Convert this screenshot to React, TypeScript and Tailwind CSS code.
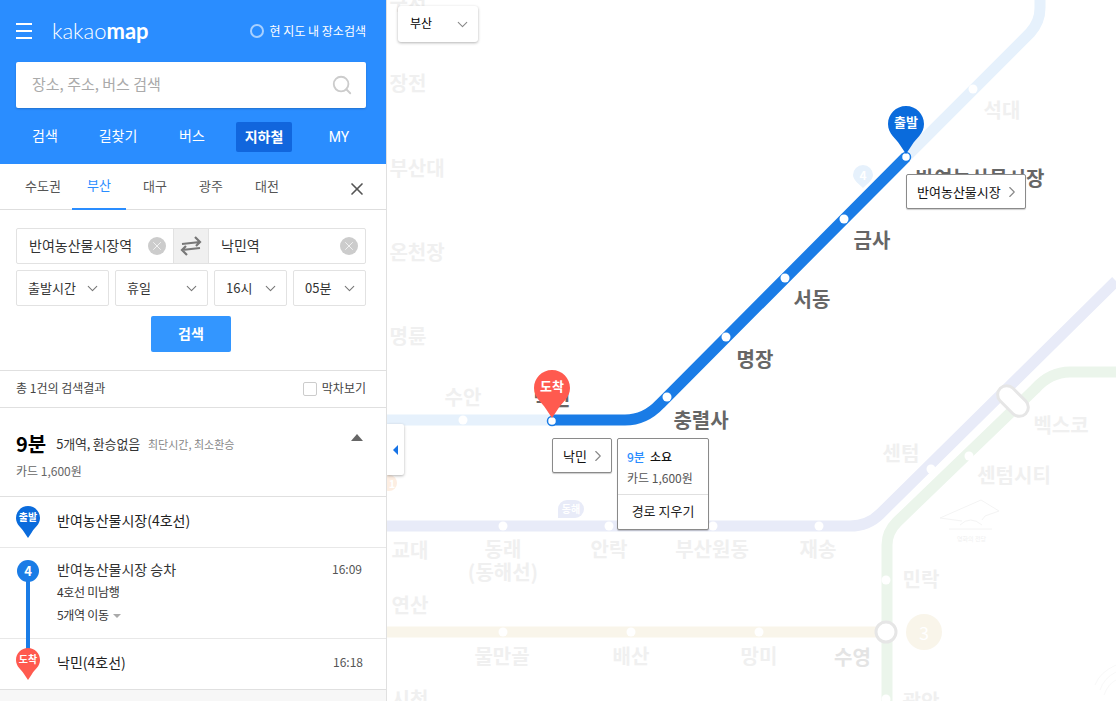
import React from "react";
import { ChevronDown, ChevronRight, X, Search } from "lucide-react";

const font = "[font-family:'Noto_Sans_CJK_KR','Noto_Sans',sans-serif]";

function Pin({ color, label, w, h, text }: { color: string; label: string; w: number; h: number; text: string }) {
  return (
    <div className="relative" style={{ width: w, height: h }}>
      <svg viewBox="0 0 36 48" width={w} height={h} className="block">
        <path d="M18 0C8 0 0 8 0 18c0 10 8 14 12 21l6 9 6-9c4-7 12-11 12-21C36 8 28 0 18 0z" fill={color} />
      </svg>
      <span className={`absolute left-0 right-0 text-center text-white font-bold ${text}`}>{label}</span>
    </div>
  );
}

const faint: [string, number, number][] = [
  ["구서", 408, 2], ["장전", 408, 83], ["부산대", 417, 168], ["온천장", 417, 252], ["명륜", 408, 336],
  ["수안", 463, 397], ["교대", 410, 550], ["동래", 503, 549], ["(동해선)", 503, 572], ["안락", 609, 549],
  ["부산원동", 712, 549], ["재송", 818, 549], ["연산", 410, 605], ["물만골", 502, 656], ["배산", 631, 656],
  ["망미", 759, 656], ["시청", 410, 699], ["민락", 921, 579], ["광안", 921, 701], ["센텀", 901, 453],
  ["센텀시티", 1014, 475], ["벡스코", 1061, 425], ["석대", 1002, 110],
];
const dark: [string, number, number][] = [
  ["금사", 872, 240], ["서동", 812, 299], ["명장", 755, 359], ["충렬사", 701, 420],
  ["반여농산물시장", 980, 178], ["낙민", 552, 398],
];
const dots: [number, number][] = [
  [463, 420], [503, 526], [609, 526], [713, 526], [819, 526], [503, 632], [631, 632], [759, 632],
  [886, 580], [969, 456], [886, 699], [931, 469], [973, 89], [667, 397], [726, 337], [785, 278], [844, 219],
];

function MapCanvas() {
  return (
    <div className="relative h-full flex-1 overflow-hidden bg-white">
      <svg width={1116} height={701} viewBox="0 0 1116 701" className="absolute -left-[387px] top-0" fill="none">
        <path d="M387 632H886" stroke="#f9f5ea" strokeWidth="11" />
        <path d="M887 701V545Q887 532 897 522L1035 389Q1050 372 1070 372H1116" stroke="#ebf5eb" strokeWidth="11" />
        <path d="M387 526H850Q868 526 880 514L1116 281" stroke="#e8ebf8" strokeWidth="11" />
        <path d="M387 420H552M906 157L1030 33Q1040 22 1040 8V0" stroke="#e6f1fc" strokeWidth="11" />
        <path d="M552 420H625Q645 420 660 404L906 157" stroke="#1a7ce6" strokeWidth="11" />
        {dots.map(([x, y]) => <circle key={`${x}-${y}`} cx={x} cy={y} r="4.5" fill="#fff" />)}
        <circle cx="552" cy="421" r="4.5" fill="#fff" stroke="#1a7ce6" strokeWidth="1.5" />
        <circle cx="906" cy="157" r="4.5" fill="#fff" stroke="#1a7ce6" strokeWidth="1.5" />
        <circle cx="886" cy="632" r="10" fill="#fff" stroke="#e6e6e6" strokeWidth="3" />
        <rect x="995" y="392" width="36" height="18" rx="9" transform="rotate(45 1013 401)" fill="#fff" stroke="#e6e6e6" strokeWidth="3" />
        <circle cx="924" cy="632" r="18" fill="#f9f5ea" />
        <circle cx="389" cy="483" r="8" fill="#fdeee2" />
        <path d="M863 165a10 10 0 0 1 10 10c0 5-6 9-10 13-4-4-10-8-10-13a10 10 0 0 1 10-10z" fill="#e6f1fc" />
        <path d="M558 509a9 9 0 0 1 9-9h8a9 9 0 0 1 0 18h-17z" fill="#e8ebf8" />
        <path d="M940 518L981 500L999 511L985 516L982 520M940 518L962 521M949 529H992M960 525Q970 515 982 525" stroke="#f4f4f4" strokeWidth="1" />
        <path d="M1116 665Q1100 672 1095 685M1116 672Q1104 678 1100 690M1116 680Q1108 684 1104 695" stroke="#f8f8f8" strokeWidth="1" />
      </svg>

      {faint.map(([t, x, y]) => (
        <span key={t} className="absolute -translate-x-1/2 -translate-y-1/2 whitespace-nowrap text-[20px] font-bold text-[#f0f0f0]" style={{ left: x - 387, top: y }}>{t}</span>
      ))}
      <span className="absolute left-[447px] top-[643px] text-[20px] font-bold leading-[28px] text-[#e4e4e4]">수영</span>
      {dark.map(([t, x, y]) => (
        <span key={t} className="absolute -translate-x-1/2 -translate-y-1/2 whitespace-nowrap text-[20px] font-bold text-[#666]" style={{ left: x - 387, top: y }}>{t}</span>
      ))}
      <span className="absolute left-[525px] top-[623px] w-[24px] text-center text-[18px] leading-[18px] font-normal text-white">3</span>
      <span className="absolute left-[170px] top-[504px] w-[28px] text-center text-[10px] leading-[10px] font-bold text-white">동해</span>
      <span className="absolute left-[471px] top-[168px] w-[10px] text-center text-[12px] leading-[14px] font-bold text-white">4</span>
      <span className="absolute left-0 top-[476px] w-[10px] text-center text-[11px] leading-[14px] font-bold text-white">1</span>
      <span className="absolute left-[570px] top-[534px] w-[26px] whitespace-nowrap text-center text-[6px] leading-[10px] text-[#f0f0f0]">영화의 전당</span>

      {/* region select */}
      <div className="absolute left-[11px] top-[6px] flex h-[36px] w-[80px] items-center justify-between rounded-[3px] bg-white pl-[12px] pr-[7px] text-[12px] text-black shadow-[0_1px_3px_rgba(0,0,0,0.3)]">
        <span className="-mt-[2px]">부산</span>
        <ChevronDown className="h-[17px] w-[17px] text-[#888]" strokeWidth={1.5} />
      </div>

      {/* side toggle */}
      <div className="absolute left-0 top-[424px] flex h-[51px] w-[17px] items-center justify-center rounded-r-[2px] bg-white shadow-[0_1px_3px_rgba(0,0,0,0.3)]">
        <div className="h-0 w-0 border-y-[5px] border-r-[5px] border-y-transparent border-r-[#1673e6]"></div>
      </div>

      {/* pins */}
      <div className="absolute left-[501px] top-[106px]">
        <Pin color="#0a6bdc" label="출발" w={36} h={48} text="top-[8px] text-[13px] leading-[16px]" />
      </div>
      <div className="absolute left-[147px] top-[370px]">
        <Pin color="#ff5a4f" label="도착" w={36} h={48} text="top-[8px] text-[13px] leading-[16px]" />
      </div>

      {/* station tags */}
      <div className="absolute left-[519px] top-[174px] flex h-[35px] w-[120px] items-center justify-between rounded-[2px] border border-[#8a8a8a] bg-white pl-[10px] pr-[4px] text-[13px] text-[#111] shadow-[0_1px_1px_rgba(0,0,0,0.2)]">
        <span>반여농산물시장</span>
        <ChevronRight className="h-[18px] w-[18px] text-[#888]" strokeWidth={1.5} />
      </div>
      <div className="absolute left-[165px] top-[438px] flex h-[35px] w-[60px] items-center justify-between rounded-[2px] border border-[#8a8a8a] bg-white pl-[10px] pr-[4px] text-[13px] text-[#111] shadow-[0_1px_1px_rgba(0,0,0,0.2)]">
        <span>낙민</span>
        <ChevronRight className="h-[18px] w-[18px] text-[#888]" strokeWidth={1.5} />
      </div>

      {/* summary card */}
      <div className="absolute left-[230px] top-[438px] h-[92px] w-[92px] rounded-[2px] border border-[#8a8a8a] bg-white shadow-[0_1px_1px_rgba(0,0,0,0.2)]">
        <div className="h-[56px] border-b border-[#e0e0e0] pl-[9px] pt-[9px]">
          <div className="text-[12px] leading-[18px] font-medium text-[#111]"><span className="mr-[5px] text-[#2a8cff]">9분</span>소요</div>
          <div className="mt-[3px] text-[12px] leading-[18px] text-[#555]">카드 1,600원</div>
        </div>
        <div className="pt-[7px] text-center text-[13px] leading-[18px] text-[#222]">경로 지우기</div>
      </div>
    </div>
  );
}

function Select({ label, w }: { label: string; w: string }) {
  return (
    <div className={`flex h-[36px] items-center justify-between rounded-[2px] border border-[#e2e2e2] pl-[11px] pr-[7px] text-[13px] text-[#333] ${w}`}>
      <span className="-mt-[1px]">{label}</span>
      <ChevronDown className="h-[17px] w-[17px] text-[#777]" strokeWidth={1.5} />
    </div>
  );
}

function Clear() {
  return (
    <div className="flex h-[18px] w-[18px] items-center justify-center rounded-full bg-[#cccccc]">
      <X className="h-[14px] w-[14px] text-white" strokeWidth={1.25} />
    </div>
  );
}

function Sidebar() {
  return (
    <div className="flex h-full w-[387px] shrink-0 flex-col border-r border-[#e0e0e0] bg-white">
      {/* blue header */}
      <div className="h-[164px] shrink-0 bg-[#2a8dff] pl-[16px] pr-[20px]">
        <div className="flex h-[62px] items-center">
          <div className="flex w-[16px] flex-col gap-[5px]">
            <div className="h-[2px] bg-white"></div>
            <div className="h-[2px] bg-white"></div>
            <div className="h-[2px] bg-white"></div>
          </div>
          <div className="ml-[20px] text-[22px] leading-none text-white [font-family:Lato,sans-serif]">
            <span className="font-light">kakao</span><span className="font-bold">map</span>
          </div>
          <div className="ml-auto flex items-center gap-[6px] text-[12px] text-white">
            <div className="h-[14px] w-[14px] rounded-full border-2 border-[#a8d0ff]"></div>
            <span>현 지도 내 장소검색</span>
          </div>
        </div>
        <div className="flex h-[46px] items-center justify-between rounded-[2px] bg-white pl-[16px] pr-[13px] shadow-[0_1px_2px_rgba(0,0,0,0.2)]">
          <span className="-mt-[2px] text-[15px] text-[#aaaaaa]">장소, 주소, 버스 검색</span>
          <Search className="h-[22px] w-[22px] text-[#cccccc]" strokeWidth={2} />
        </div>
        <div className="mt-[14px] flex h-[30px] items-center text-[14px] text-white">
          <div className="-mt-[3px] w-[58px] text-center">검색</div>
          <div className="-mt-[3px] w-[88px] text-center">길찾기</div>
          <div className="-mt-[3px] w-[60px] text-center">버스</div>
          <div className="ml-[14px] flex h-[30px] w-[56px] items-center justify-center rounded-[2px] bg-[#1166dd] pb-[2px] font-bold">지하철</div>
          <div className="flex-1 pl-[20px] text-center [font-family:Roboto,sans-serif]">MY</div>
        </div>
      </div>

      {/* region tabs */}
      <div className="flex h-[46px] shrink-0 items-stretch border-b border-[#dedede] text-[13px] text-[#555]">
        <div className="flex w-[72px] items-center justify-center pb-[2px] pl-[14px]">수도권</div>
        <div className="-mb-px flex w-[54px] items-center justify-center border-b-[2px] border-[#2a8dff] pb-[2px] text-[#2a8dff]">부산</div>
        <div className="flex w-[58px] items-center justify-center pb-[2px]">대구</div>
        <div className="flex w-[54px] items-center justify-center pb-[2px]">광주</div>
        <div className="flex w-[58px] items-center justify-center pb-[2px]">대전</div>
        <div className="ml-auto flex items-center pr-[19px] pt-[5px]">
          <X className="h-[20px] w-[20px] text-[#555]" strokeWidth={2} />
        </div>
      </div>

      {/* search form */}
      <div className="h-[161px] shrink-0 border-b border-[#e0e0e0] pl-[16px] pr-[20px] pt-[18px]">
        <div className="flex h-[36px] rounded-[2px] border border-[#e2e2e2] text-[14px] text-[#333]">
          <div className="flex w-[156px] items-center justify-between pl-[12px] pr-[7px]">
            <span className="-mt-[2px] whitespace-nowrap">반여농산물시장역</span>
            <Clear />
          </div>
          <div className="flex w-[36px] items-center justify-center border-x border-[#e2e2e2] bg-[#f0f0f0]">
            <svg width="22" height="20" viewBox="0 0 22 20" fill="none" stroke="#777" strokeWidth="2.2">
              <path d="M2 8L20 6M15 1L20 6L16 10" />
              <path d="M20 12L2 14M7 19L2 14L6 10" />
            </svg>
          </div>
          <div className="flex flex-1 items-center justify-between pl-[12px] pr-[7px]">
            <span className="-mt-[2px]">낙민역</span>
            <Clear />
          </div>
        </div>
        <div className="mt-[6px] flex justify-between">
          <Select label="출발시간" w="w-[93px]" />
          <Select label="휴일" w="w-[93px]" />
          <Select label="16시" w="w-[73px]" />
          <Select label="05분" w="w-[73px]" />
        </div>
        <div className="mt-[10px] flex justify-center">
          <div className="flex h-[36px] w-[80px] items-center justify-center rounded-[2px] bg-[#3396ff] pb-[2px] text-[14px] font-bold text-white">검색</div>
        </div>
      </div>

      {/* result count */}
      <div className="flex h-[37px] shrink-0 items-center justify-between border-b border-[#e0e0e0] pl-[16px] pr-[20px] text-[12px] text-[#444]">
        <span className="-mt-[2px]">총 1건의 검색결과</span>
        <div className="flex items-center gap-[5px]">
          <div className="h-[14px] w-[14px] rounded-[2px] border border-[#cccccc]"></div>
          <span className="-mt-[2px]">막차보기</span>
        </div>
      </div>

      {/* route summary */}
      <div className="relative h-[89px] shrink-0 border-b border-[#e0e0e0] px-[16px] pt-[21px]">
        <div className="flex h-[30px] items-center">
          <span className="text-[20px] font-bold text-black">9분</span>
          <span className="ml-[10px] text-[13px] tracking-[-0.2px] text-[#333]">5개역, 환승없음</span>
          <span className="ml-[8px] text-[11px] text-[#888]">최단시간, 최소환승</span>
        </div>
        <div className="mt-[3px] text-[12px] text-[#666]">카드 1,600원</div>
        <div className="absolute right-[23px] top-[26px] h-0 w-0 border-x-[6px] border-b-[7px] border-x-transparent border-b-[#666]"></div>
      </div>

      {/* departure */}
      <div className="flex h-[51px] shrink-0 items-center border-b border-[#e8e8e8] pl-[16px] text-[14px] text-[#222]">
        <Pin color="#0a6bdc" label="출발" w={24} h={32} text="top-[5px] text-[10px] leading-[12px]" />
        <span className="-mt-[4px] ml-[17px]">반여농산물시장(4호선)</span>
      </div>

      {/* ride */}
      <div className="relative h-[91px] shrink-0 border-b border-[#e8e8e8] pl-[57px] pr-[24px] pt-[11px]">
        <div className="absolute left-[26px] top-[20px] h-[92px] w-[4px] bg-[#1a7ce6]"></div>
        <div className="absolute left-[17px] top-[12px] flex h-[22px] w-[22px] items-center justify-center rounded-full bg-[#1a7ce6] text-[13px] font-bold text-white">4</div>
        <div className="flex items-center justify-between text-[14px] leading-[20px] text-[#333]">
          <span>반여농산물시장 승차</span>
          <span className="text-[12px] text-[#555]">16:09</span>
        </div>
        <div className="mt-[4px] text-[12px] leading-[18px] tracking-[-0.3px] text-[#333]">4호선 미남행</div>
        <div className="mt-[5px] flex items-center gap-[4px] text-[12px] leading-[18px] tracking-[-0.3px] text-[#333]">
          5개역 이동
          <div className="mt-[2px] h-0 w-0 border-x-[4px] border-t-[4px] border-x-transparent border-t-[#aaa]"></div>
        </div>
      </div>

      {/* arrival */}
      <div className="flex h-[51px] shrink-0 items-center border-b border-[#e0e0e0] pl-[16px] pr-[23px] text-[14px] text-[#222]">
        <div className="relative z-10"><Pin color="#ff5a4f" label="도착" w={24} h={32} text="top-[5px] text-[10px] leading-[12px]" /></div>
        <span className="-mt-[4px] ml-[17px]">낙민(4호선)</span>
        <span className="-mt-[4px] ml-auto text-[12px] text-[#555]">16:18</span>
      </div>

      <div className="flex-1 bg-[#f7f7f7]"></div>
    </div>
  );
}

export default function App() {
  return (
    <div className={`flex h-[701px] w-[1116px] overflow-hidden ${font}`}>
      <Sidebar />
      <MapCanvas />
    </div>
  );
}
